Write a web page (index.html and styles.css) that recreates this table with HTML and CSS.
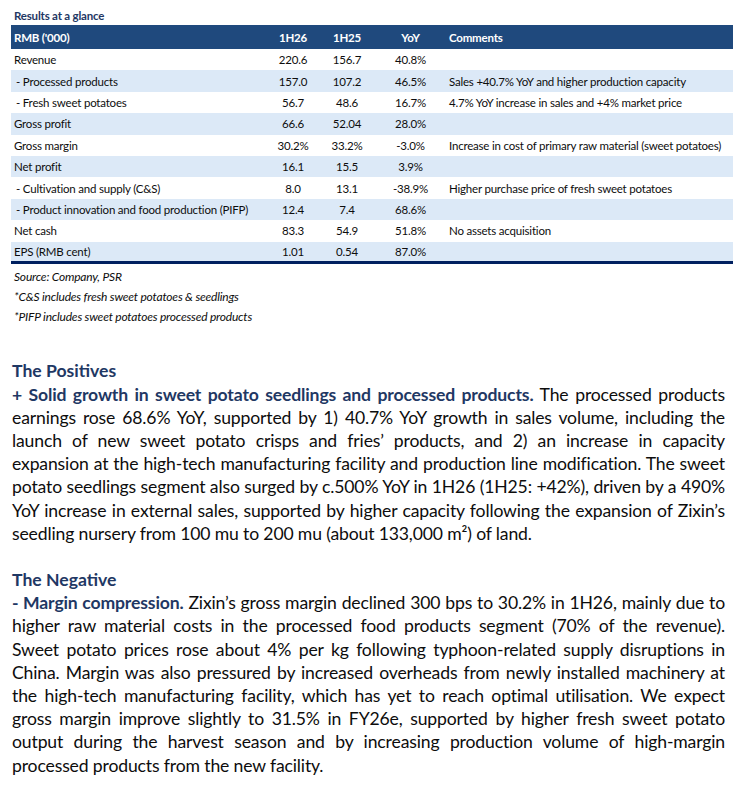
FILE: index.html
```html
<!DOCTYPE html>
<html>
<head>
<meta charset="utf-8">
<link rel="stylesheet" href="styles.css">
</head>
<body>
<div class="page">
  <section class="glance">
    <div class="glance-title">Results at a glance</div>
    <table class="results">
      <colgroup>
        <col class="c-label"><col class="c-num"><col class="c-num"><col class="c-yoy"><col class="c-com">
      </colgroup>
      <thead>
        <tr><th class="lab">RMB ('000)</th><th>1H26</th><th>1H25</th><th>YoY</th><th class="com">Comments</th></tr>
      </thead>
      <tbody>
        <tr><td class="lab">Revenue</td><td>220.6</td><td>156.7</td><td>40.8%</td><td class="com"></td></tr>
        <tr class="band"><td class="lab sub">- Processed products</td><td>157.0</td><td>107.2</td><td>46.5%</td><td class="com">Sales +40.7% YoY and higher production capacity</td></tr>
        <tr><td class="lab sub">- Fresh sweet potatoes</td><td>56.7</td><td>48.6</td><td>16.7%</td><td class="com">4.7% YoY increase in sales and +4% market price</td></tr>
        <tr class="band"><td class="lab">Gross profit</td><td>66.6</td><td>52.04</td><td>28.0%</td><td class="com"></td></tr>
        <tr><td class="lab">Gross margin</td><td>30.2%</td><td>33.2%</td><td>-3.0%</td><td class="com">Increase in cost of primary raw material (sweet potatoes)</td></tr>
        <tr class="band"><td class="lab">Net profit</td><td>16.1</td><td>15.5</td><td>3.9%</td><td class="com"></td></tr>
        <tr><td class="lab sub">- Cultivation and supply (C&amp;S)</td><td>8.0</td><td>13.1</td><td>-38.9%</td><td class="com">Higher purchase price of fresh sweet potatoes</td></tr>
        <tr class="band"><td class="lab sub">- Product innovation and food production (PIFP)</td><td>12.4</td><td>7.4</td><td>68.6%</td><td class="com"></td></tr>
        <tr><td class="lab">Net cash</td><td>83.3</td><td>54.9</td><td>51.8%</td><td class="com">No assets acquisition</td></tr>
        <tr class="band last"><td class="lab">EPS (RMB cent)</td><td>1.01</td><td>0.54</td><td>87.0%</td><td class="com"></td></tr>
      </tbody>
    </table>
    <div class="notes">
      <div>Source: Company, PSR</div>
      <div>*C&amp;S includes fresh sweet potatoes &amp; seedlings</div>
      <div>*PIFP includes sweet potatoes processed products</div>
    </div>
  </section>

  <section class="story">
    <h2 class="story-head">The Positives</h2>
    <p class="story-text">
      <span class="ln"><b>+ Solid growth in sweet potato seedlings and processed products.</b> The processed products</span>
      <span class="ln">earnings rose 68.6% YoY, supported by 1) 40.7% YoY growth in sales volume, including the</span>
      <span class="ln">launch of new sweet potato crisps and fries’ products, and 2) an increase in capacity</span>
      <span class="ln">expansion at the high-tech manufacturing facility and production line modification. The sweet</span>
      <span class="ln">potato seedlings segment also surged by c.500% YoY in 1H26 (1H25: +42%), driven by a 490%</span>
      <span class="ln">YoY increase in external sales, supported by higher capacity following the expansion of Zixin’s</span>
      <span class="ln end">seedling nursery from 100 mu to 200 mu (about 133,000 m²) of land.</span>
    </p>
  </section>

  <section class="story">
    <h2 class="story-head">The Negative</h2>
    <p class="story-text">
      <span class="ln"><b>- Margin compression.</b> Zixin’s gross margin declined 300 bps to 30.2% in 1H26, mainly due to</span>
      <span class="ln">higher raw material costs in the processed food products segment (70% of the revenue).</span>
      <span class="ln">Sweet potato prices rose about 4% per kg following typhoon-related supply disruptions in</span>
      <span class="ln">China. Margin was also pressured by increased overheads from newly installed machinery at</span>
      <span class="ln">the high-tech manufacturing facility, which has yet to reach optimal utilisation. We expect</span>
      <span class="ln">gross margin improve slightly to 31.5% in FY26e, supported by higher fresh sweet potato</span>
      <span class="ln">output during the harvest season and by increasing production volume of high-margin</span>
      <span class="ln end">processed products from the new facility.</span>
    </p>
  </section>
</div>
</body>
</html>
```

FILE: styles.css
```css
* { box-sizing: border-box; }
html, body { margin: 0; padding: 0; background: #ffffff; }
body {
  font-family: Lato, "Open Sans", "Liberation Sans", sans-serif;
  color: #000000;
}
.page {
  width: 733px;
  padding: 8px 0 0 11px;
}
.glance-title {
  font-size: 11.5px;
  letter-spacing: -0.2px;
  line-height: 16px;
  font-weight: 700;
  color: #1f3864;
  padding-left: 3px;
  margin-bottom: 1px;
}
.results {
  width: 722px;
  border-collapse: collapse;
  table-layout: fixed;
  font-size: 11.5px;
  letter-spacing: -0.2px;
  color: #0d0d0d;
}
.c-label { width: 255px; }
.c-num { width: 54px; }
.c-yoy { width: 73px; }
.c-com { width: 286px; }
.results th, .results td {
  padding: 0;
  text-align: center;
  white-space: nowrap;
  overflow: hidden;
}
.results thead tr { background: #1f497d; }
.results th {
  color: #ffffff;
  font-weight: 700;
  height: 24px;
}
.results td { height: 21.4px; }
.results .lab { text-align: left; padding-left: 3px; }
.results .lab.sub { padding-left: 5px; }
.results .com { text-align: left; padding-left: 2px; }
.results .band { background: #dce9f7; }
.results .last td { border-bottom: 3px solid #002060; }
.notes {
  font-size: 12px;
  letter-spacing: -0.2px;
  line-height: 20px;
  font-style: italic;
  color: #0d0d0d;
  padding: 3px 0 0 3px;
}
.story { width: 714px; margin-top: 32px; }
.story + .story { margin-top: 23px; }
.story-head {
  margin: 0;
  font-size: 17.6px;
  line-height: 23.2px;
  font-weight: 700;
  color: #1f3864;
  padding-left: 1px;
}
.story-text {
  margin: 0;
  font-size: 17.6px;
  letter-spacing: -0.15px;
  line-height: 23.2px;
  color: #0d0d0d;
  padding-left: 1px;
}
.story-text b { color: #1f3864; font-weight: 700; }
.ln {
  display: block;
  text-align: justify;
  text-align-last: justify;
  white-space: nowrap;
}
.ln.end { text-align-last: left; }
```
